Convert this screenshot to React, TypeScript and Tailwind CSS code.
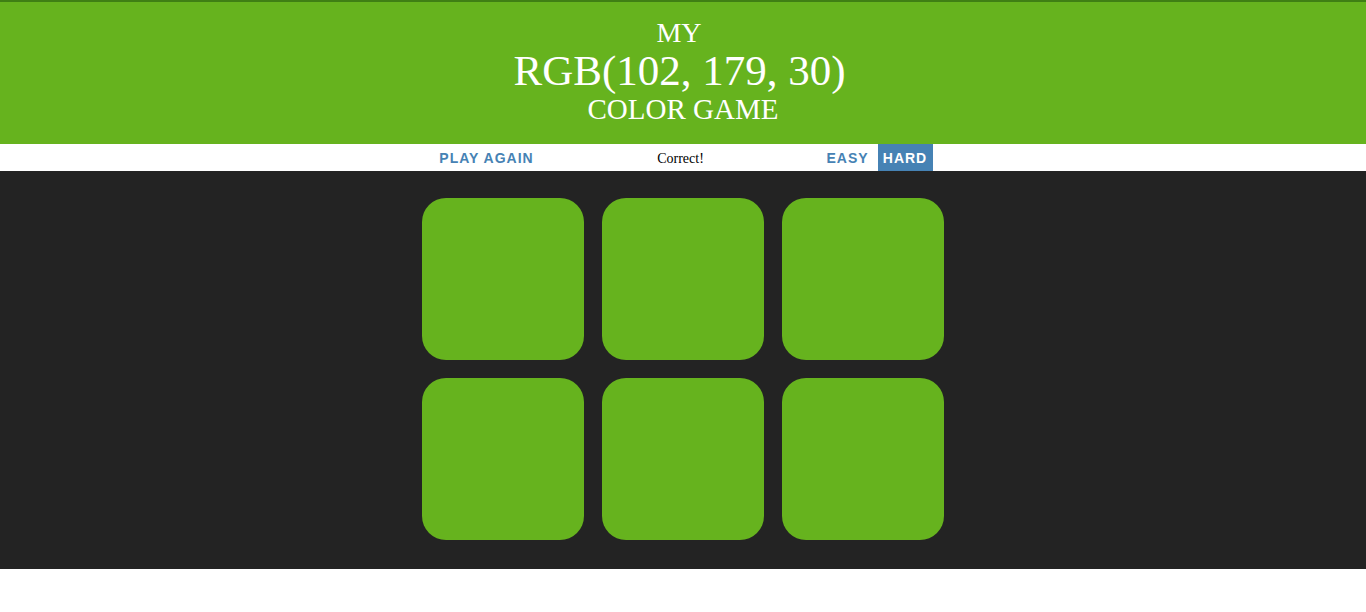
const squares = Array.from({ length: 6 });

export default function App() {
  return (
    <div className="min-h-[612px] w-full bg-white">
      {/* Title */}
      <h1 className="border-t-2 border-[#3f7f14] bg-[#66b31e] pb-5 pt-4 text-center font-normal uppercase text-white [font-family:'Liberation_Serif',serif]">
        <div className="pr-[8px] text-[28px] leading-[30px]">My</div>
        <div className="pr-[7px] text-[43px] leading-[46px]">RGB(102, 179, 30)</div>
        <div className="text-[29px] leading-[30px]">Color Game</div>
      </h1>

      {/* Controls */}
      <div className="flex h-[27px] items-stretch justify-center bg-white">
        <button className="w-[106px] pt-px text-[14px] font-bold uppercase tracking-[1px] text-[#4682b4] [font-family:'Liberation_Sans',sans-serif]">
          Play Again
        </button>
        <span className="flex w-[282px] items-center justify-center pt-px text-[14px] text-black [font-family:'Liberation_Serif',serif]">
          Correct!
        </span>
        <button className="w-[52px] pt-px text-[14px] font-bold uppercase tracking-[1px] text-[#4682b4] [font-family:'Liberation_Sans',sans-serif]">
          Easy
        </button>
        <button className="ml-1 w-[55px] bg-[#4682b4] pt-px text-[14px] font-bold uppercase tracking-[1px] text-white [font-family:'Liberation_Sans',sans-serif]">
          Hard
        </button>
      </div>

      {/* Squares */}
      <div className="bg-[#232323] pb-[29px] pt-[27px]">
        <div className="mx-auto grid w-[522px] grid-cols-3 gap-[18px]">
          {squares.map((_, i) => (
            <div key={i} className="h-[162px] w-[162px] rounded-[24px] bg-[#66b31e]" />
          ))}
        </div>
      </div>
    </div>
  );
}
